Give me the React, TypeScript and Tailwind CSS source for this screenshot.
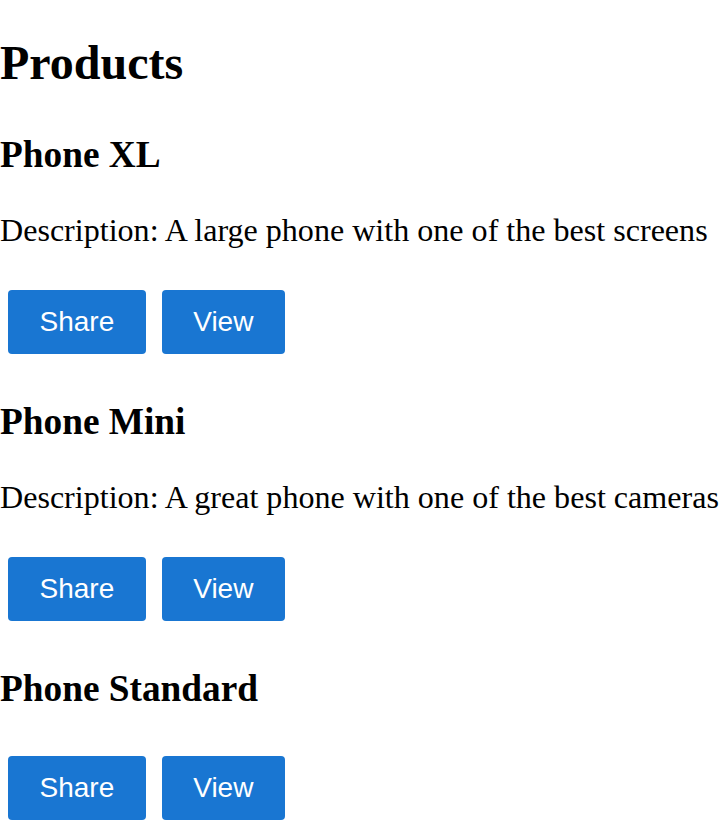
const products = [
  { name: 'Phone XL', description: 'A large phone with one of the best screens' },
  { name: 'Phone Mini', description: 'A great phone with one of the best cameras' },
  { name: 'Phone Standard', description: '' },
];

function ProductButton({ label }: { label: string }) {
  return (
    <button className="mx-[8px] rounded-[4px] bg-[#1976d2] px-[31.5px] py-[16px] font-['Liberation_Sans',Arial,sans-serif] text-[28px] leading-[32px] text-white">
      {label}
    </button>
  );
}

export default function App() {
  return (
    <div className="overflow-hidden bg-white font-['Liberation_Serif','Times_New_Roman',serif] text-black">
      <div className="pt-[35px]">
        <h1 className="mb-[43px] text-[48px] font-bold leading-[55px]">Products</h1>
        {products.map((product) => (
          <div key={product.name}>
            <h2
              className={
                product.description
                  ? 'mb-[36px] text-[37.3px] font-bold leading-[43px]'
                  : 'mb-[46px] text-[37.3px] font-bold leading-[43px]'
              }
            >
              {product.name}
            </h2>
            {product.description && (
              <p className="mb-[41px] whitespace-nowrap text-[32.1px] leading-[37px]">
                Description: {product.description}
              </p>
            )}
            <div className="mb-[46px] flex">
              <ProductButton label="Share" />
              <ProductButton label="View" />
            </div>
          </div>
        ))}
      </div>
    </div>
  );
}
